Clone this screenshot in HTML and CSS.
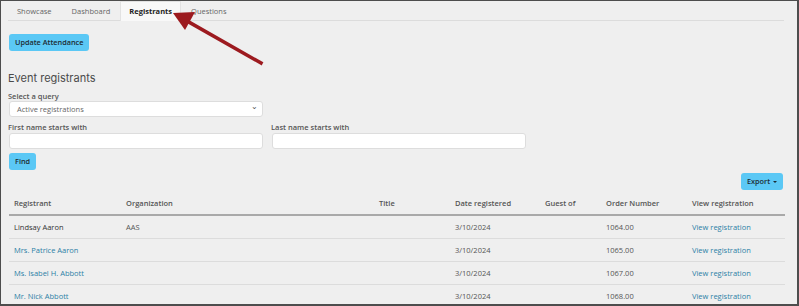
FILE: index.html
```html
<!DOCTYPE html>
<html>
<head>
<meta charset="utf-8">
<link rel="stylesheet" href="styles.css">
</head>
<body>
<div class="frame">
  <nav class="tabs">
    <a class="tab">Showcase</a>
    <a class="tab">Dashboard</a>
    <a class="tab active">Registrants</a>
    <a class="tab">Questions</a>
  </nav>
  <div class="content">
    <button class="btn btn-attend">Update Attendance</button>
    <h2 class="title">Event registrants</h2>
    <label class="lbl">Select a query</label>
    <div class="select">Active registrations<span class="caret-sel">&#8964;</span></div>
    <div class="names">
      <div class="field">
        <label class="lbl">First name starts with</label>
        <div class="input"></div>
      </div>
      <div class="field">
        <label class="lbl">Last name starts with</label>
        <div class="input"></div>
      </div>
    </div>
    <button class="btn btn-find">Find</button>
    <div class="export-row"><button class="btn btn-export">Export <span class="caret"></span></button></div>
    <table class="grid">
      <thead>
        <tr>
          <th class="c1">Registrant</th>
          <th class="c2">Organization</th>
          <th class="c3">Title</th>
          <th class="c4">Date registered</th>
          <th class="c5">Guest of</th>
          <th class="c6">Order Number</th>
          <th class="c7">View registration</th>
        </tr>
      </thead>
      <tbody>
        <tr><td class="plain">Lindsay Aaron</td><td>AAS</td><td></td><td>3/10/2024</td><td></td><td>1064.00</td><td><a class="link">View registration</a></td></tr>
        <tr><td><a class="link">Mrs. Patrice Aaron</a></td><td></td><td></td><td>3/10/2024</td><td></td><td>1065.00</td><td><a class="link">View registration</a></td></tr>
        <tr><td><a class="link">Ms. Isabel H. Abbott</a></td><td></td><td></td><td>3/10/2024</td><td></td><td>1067.00</td><td><a class="link">View registration</a></td></tr>
        <tr><td><a class="link">Mr. Nick Abbott</a></td><td></td><td></td><td>3/10/2024</td><td></td><td>1068.00</td><td><a class="link">View registration</a></td></tr>
      </tbody>
    </table>
  </div>
  <svg class="arrow" width="110" height="70" viewBox="0 0 110 70">
    <line x1="90" y1="56" x2="16" y2="14" stroke="#9c1a1f" stroke-width="3.5" stroke-linecap="square"/>
    <polygon points="2,6 24,5 14,23" fill="#9c1a1f"/>
  </svg>
</div>
</body>
</html>
```
FILE: styles.css
```css
* { box-sizing: border-box; }
html, body { margin: 0; padding: 0; }
body {
  width: 799px;
  height: 306px;
  overflow: hidden;
  font-family: "Open Sans", "Liberation Sans", sans-serif;
  color: #444;
}
.frame {
  position: relative;
  width: 799px;
  height: 306px;
  background: #efefef;
  border-style: solid;
  border-color: #4d4d4d;
  border-width: 1px 2px 2px 1px;
  overflow: hidden;
}
.tabs {
  display: flex;
  margin: 0 13px 0 7px;
  height: 20px;
  border-bottom: 1px solid #dcdcdc;
}
.tab {
  font-size: 7.5px;
  color: #666;
  padding: 0 9px;
  line-height: 19px;
  border: 1px solid transparent;
  border-bottom: none;
}
.tab:first-child { padding-left: 8px; }
.tab.active {
  background: #f8f8f8;
  border-color: #e2e2e2;
  color: #222;
  font-weight: 700;
  margin-bottom: -1px;
  height: 20px;
  padding: 0 8px;
}
.content {
  padding: 13px 14px 0 7px;
}
.btn {
  display: block;
  border: none;
  background: #5bc8f5;
  border-radius: 3px;
  color: #1d2b33;
  font-family: "Open Sans", "Liberation Sans", sans-serif;
  font-size: 7.3px;
  font-weight: 600;
  padding: 0 6px;
  height: 17px;
  line-height: 17px;
}
.btn-attend { margin-left: 1px; }
.title {
  font-family: "Inter", "Open Sans", sans-serif;
  font-weight: 400;
  font-size: 11px;
  color: #4a4a4a;
  margin: 20px 0 0 0;
  line-height: 14px;
}
.lbl {
  display: block;
  font-size: 7.5px;
  font-weight: 600;
  color: #555;
  line-height: 10px;
}
.content > .lbl { margin-top: 6px; }
.select {
  position: relative;
  width: 254px;
  height: 16px;
  margin-left: 1px;
  background: #fff;
  border: 1px solid #ddd;
  border-radius: 3px;
  font-size: 7.5px;
  color: #666;
  line-height: 14px;
  padding-left: 7px;
}
.caret-sel {
  position: absolute;
  right: 4px;
  top: -3px;
  font-size: 8px;
  color: #555;
}
.names {
  display: flex;
  gap: 9px;
  margin-top: 5px;
  margin-left: 1px;
}
.field .lbl { margin-left: -1px; margin-bottom: 1px; }
.input {
  width: 254px;
  height: 16px;
  background: #fff;
  border: 1px solid #ddd;
  border-radius: 3px;
}
.btn-find {
  margin-top: 4px;
  margin-left: 1px;
  padding: 0 6px;
}
.export-row {
  display: flex;
  justify-content: flex-end;
  margin-top: 3px;
}
.btn-export { padding: 0 6px; }
.caret {
  display: inline-block;
  width: 0; height: 0;
  border-left: 2px solid transparent;
  border-right: 2px solid transparent;
  border-top: 2px solid #1d2b33;
  vertical-align: middle;
  margin-left: 1px;
}
.grid {
  width: 776px;
  border-collapse: collapse;
  margin-top: 2px;
  margin-left: 1px;
  font-size: 7.5px;
  table-layout: fixed;
}
.grid th {
  text-align: left;
  font-weight: 600;
  color: #555;
  padding: 0 0 0 5px;
  height: 23px;
  border-bottom: 2px solid #a9a9a9;
}
.grid td {
  padding: 0 0 0 5px;
  height: 23px;
  color: #555;
  border-bottom: 1px solid #dcdcdc;
}
.grid td.plain { color: #333; }
.c1 { width: 112px; }
.c2 { width: 253px; }
.c3 { width: 76px; }
.c4 { width: 90px; }
.c5 { width: 61px; }
.c6 { width: 86px; }
.c7 { width: 98px; }
.link { color: #2c7fa6; }
.arrow {
  position: absolute;
  left: 170px;
  top: 6px;
}
```
